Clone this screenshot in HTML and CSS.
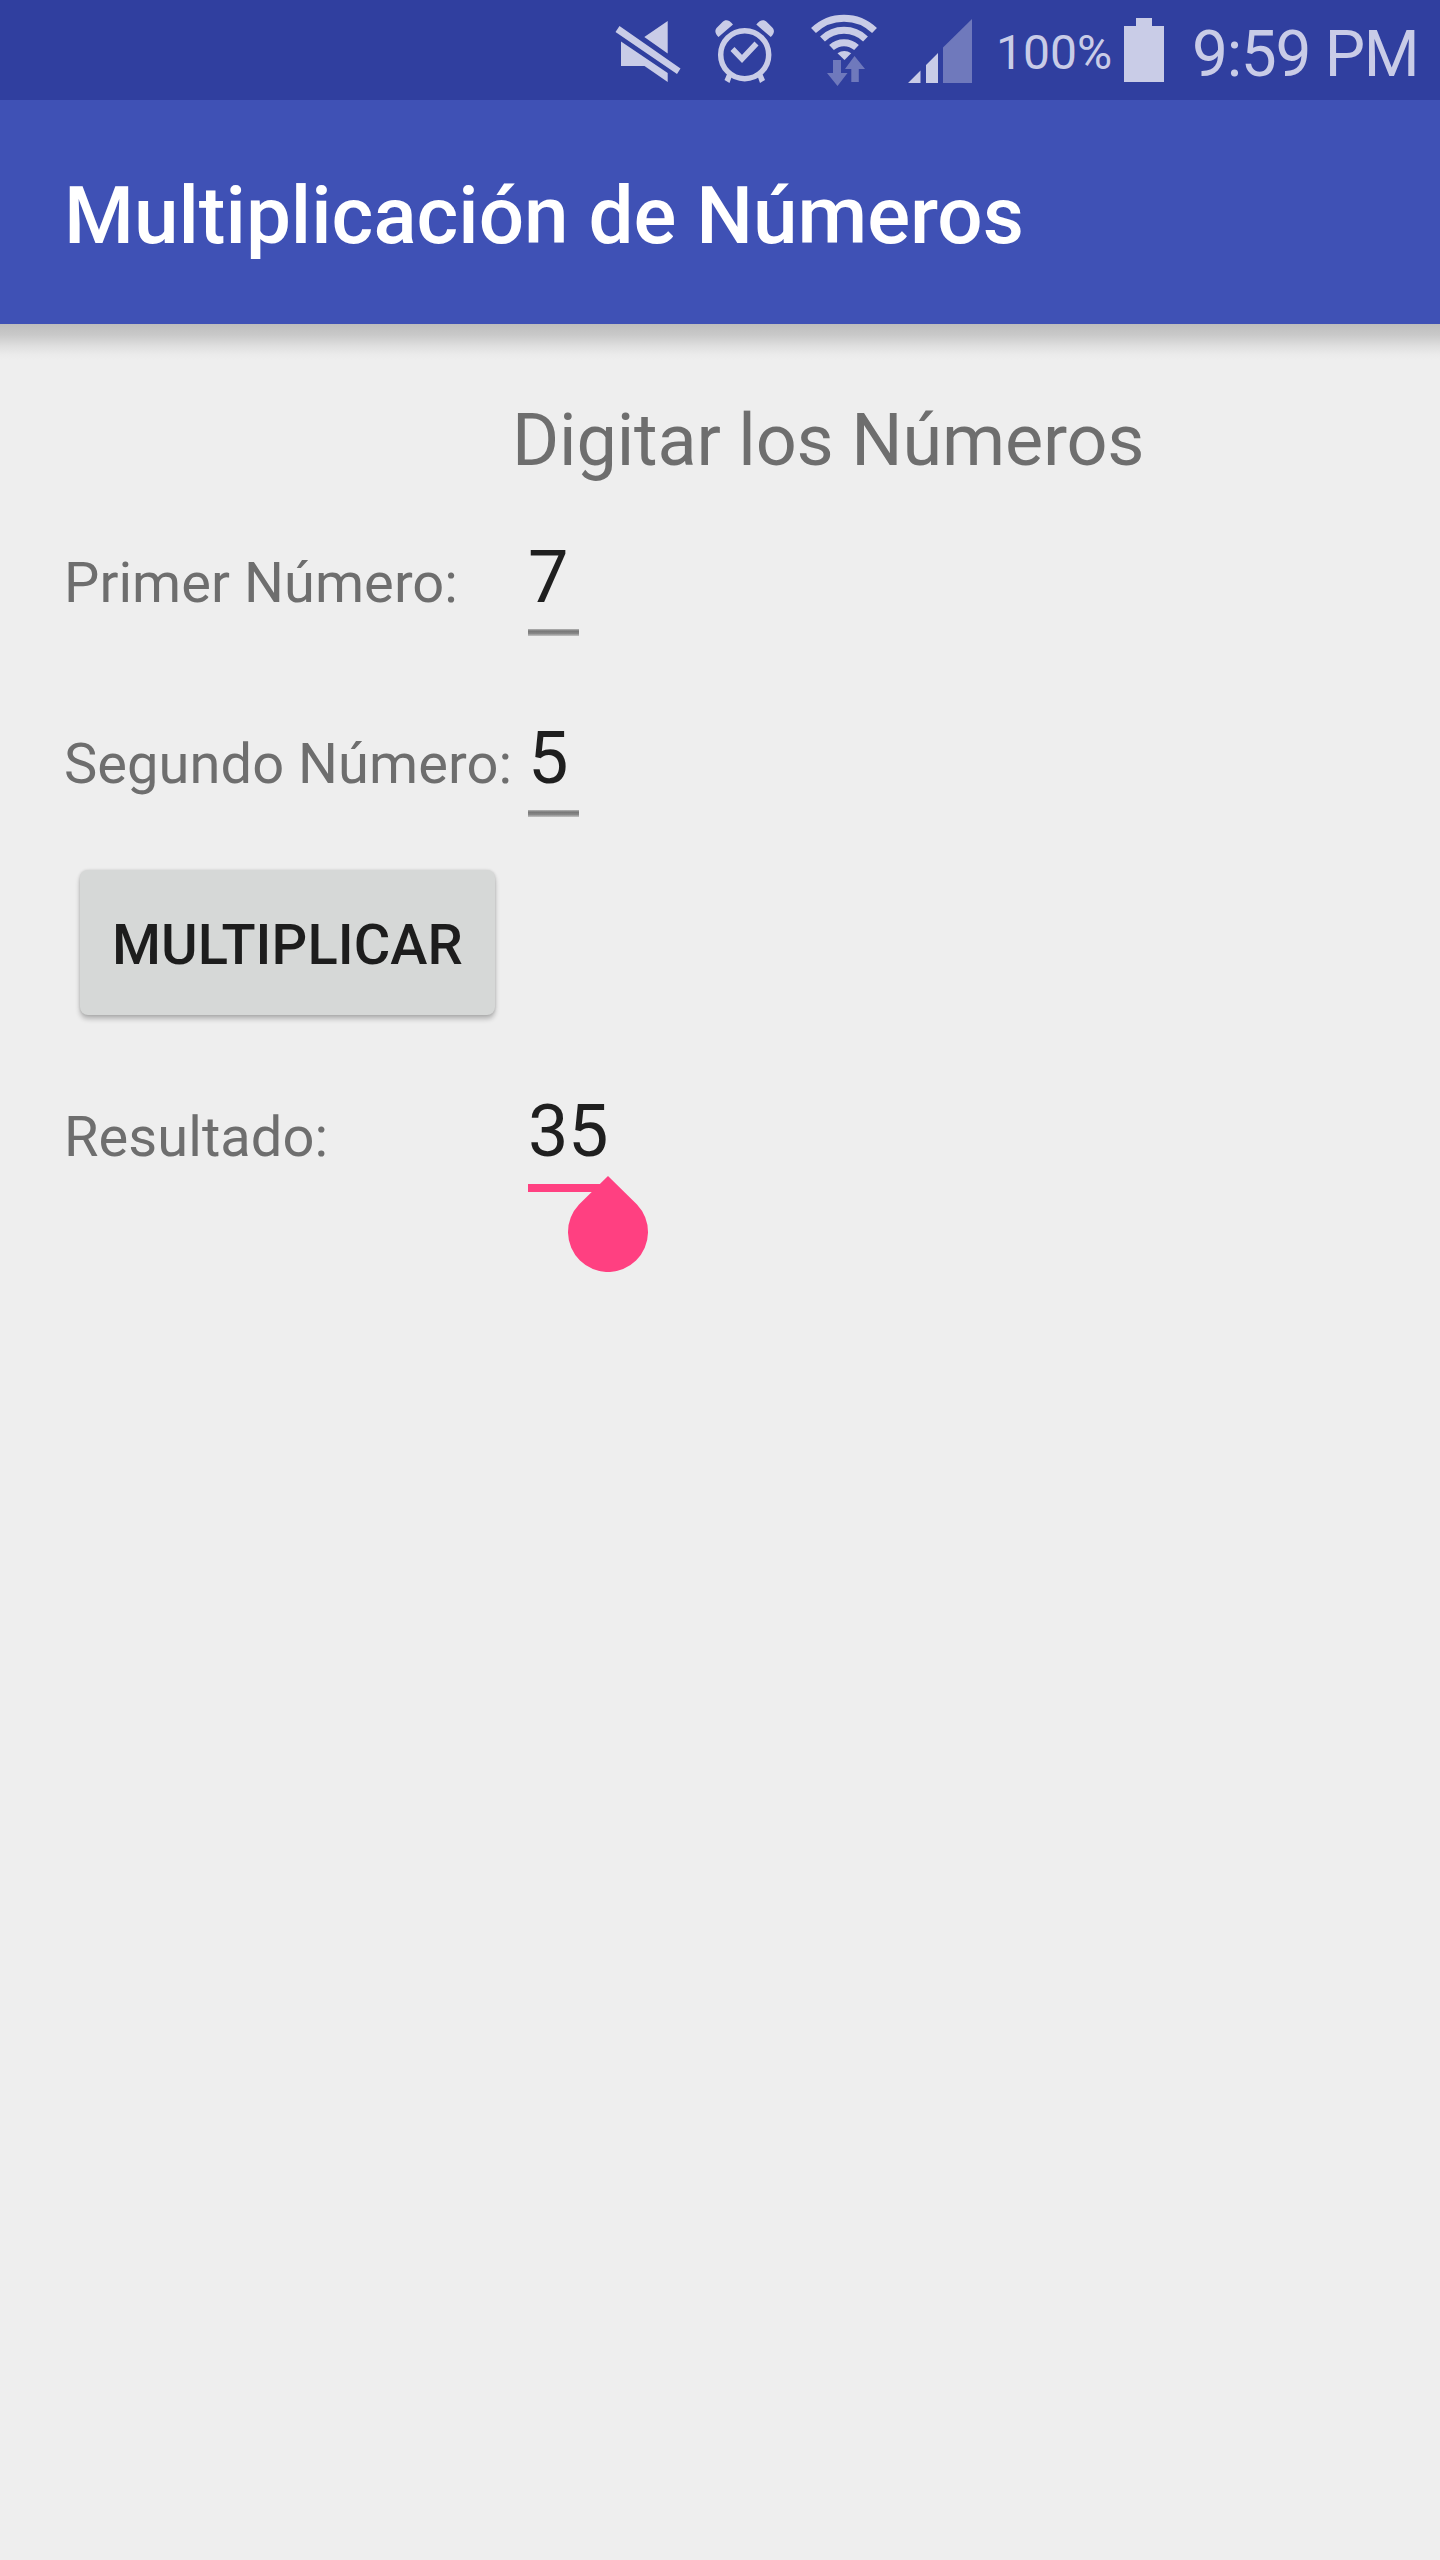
FILE: index.html
```html
<!DOCTYPE html>
<html lang="es">
<head>
<meta charset="utf-8">
<title>Multiplicación de Números</title>
<link rel="stylesheet" href="styles.css">
</head>
<body>
<header class="status-bar">
  <svg class="status-icons" viewBox="0 0 380 100" aria-hidden="true">
    <!-- muted speaker -->
    <path class="lit" d="M44.3 37 67.7 21v32.500zM21 41.500 67.700 73v9L44.500 66H21zM19.500 26 80.500 68.500 77 74 15.500 32z"/>
    <!-- alarm clock -->
    <circle class="ring" cx="144.700" cy="54.700" r="24"/>
    <path class="lit" d="M118.500 37c-4-4-4-7-1-10l5-5c3-3 7-2 10.500 2.500zM170.800 37c4-4 4-7 1-10l-5-5c-3-3-7-2-10.500 2.500zM127.500 73l4.500 3-2.500 7-5-3zM162 73l-4.500 3 2.500 7 5-3z"/>
    <path class="tick" d="m132.500 49 9.500 10 14.500-15.500"/>
    <!-- wifi with traffic arrows -->
    <path class="wave" d="M213.500 30.500a44 44 0 0 1 61 0M222.500 39a31 31 0 0 1 43 0M231.500 47.500a18.500 18.500 0 0 1 25 0"/>
    <path class="lit" d="M237.500 53.300q6.800-4.800 13.700 0L244.500 60z"/>
    <path class="dim" d="M233 60h8v13h6.500L237.500 86 227 73h6zM254.500 56 265 69h-6.200v13h-7.500V69H245z"/>
    <!-- signal strength -->
    <path class="lit" d="M308 83l12.500-12.500V83zM326 83V65l12-12v30z"/>
    <path class="dim" d="M343 83V47.500L372 19v64z"/>
  </svg>
  <span class="percent">100%</span>
  <svg class="battery" viewBox="0 0 40 64" aria-hidden="true"><path class="lit" d="M12 0h16v8h12v56H0V8h12z"/></svg>
  <span class="clock">9:59 PM</span>
</header>
<div class="app-bar"><h1 class="title">Multiplicación de Números</h1></div>
<main class="content">
  <h2 class="heading">Digitar los Números</h2>
  <div class="row"><span class="label">Primer Número:</span><span class="field">7</span></div>
  <div class="row"><span class="label">Segundo Número:</span><span class="field">5</span></div>
  <div class="actions"><button class="button" type="button">MULTIPLICAR</button></div>
  <div class="row">
    <span class="label">Resultado:</span>
    <span class="field focused">35<svg class="handle" viewBox="0 0 80 96" aria-hidden="true"><path d="M40 0 69 28.500A40 40 0 1 1 11 28.500z"/></svg></span>
  </div>
</main>
</body>
</html>
```
FILE: styles.css
```css
* { box-sizing: border-box; }

body {
  margin: 0;
  min-height: 2560px;
  background: #eee;
  font-family: Roboto, sans-serif;
  overflow-x: hidden;
}

.status-bar {
  display: flex;
  height: 100px;
  padding-left: 600px;
  background: #303f9f;
  color: #c9cce7;
  white-space: nowrap;
}

.status-icons { flex: none; width: 380px; height: 100px; }
.lit { fill: #c9cce7; }
.dim { fill: #6f79bc; }
.ring, .tick, .wave { fill: none; stroke: #c9cce7; }
.ring { stroke-width: 5.5px; }
.tick { stroke-width: 5.5px; }
.wave { stroke-width: 7px; }

.percent {
  width: 128px;
  margin-left: 16px;
  font-size: 48px;
  line-height: 105px;
}

.battery { flex: none; width: 40px; height: 64px; margin: 18px 0 0 0; }

.clock {
  margin-left: 28px;
  font-size: 64px;
  letter-spacing: -1.3px;
  line-height: 110px;
}

.app-bar {
  position: relative;
  height: 224px;
  padding: 4px 64px 0;
  background: #3f51b5;
}

.app-bar::after {
  content: "";
  position: absolute;
  top: 100%;
  left: 0;
  right: 0;
  height: 36px;
  background: linear-gradient(#bdbdbd, #c9c9c9 30%, #dedede 60%, #ebebeb 85%, #eee);
}

.title {
  margin: 0;
  color: #fff;
  font-size: 80px;
  font-weight: 500;
  line-height: 224px;
}

.content { padding: 64px 0 0 64px; }

.heading {
  margin: 0 0 0 448px;
  color: #6e6e6e;
  font-size: 72px;
  font-weight: 400;
  letter-spacing: -.17px;
  line-height: 105px;
}

.row {
  display: flex;
  align-items: baseline;
  height: 181px;
  padding-top: 43px;
}

.label {
  width: 464px;
  color: #6e6e6e;
  font-size: 56px;
  letter-spacing: .06px;
}

.field {
  position: relative;
  min-width: 51px;
  height: 100px;
  color: #1f1f1f;
  font-size: 72px;
  letter-spacing: -.5px;
  line-height: 84px;
  background: linear-gradient(#b5b5b5, #777 30%, #888 65%, #c4c4c4) 0 100% / 100% 7px no-repeat;
}

.focused {
  height: 102px;
  background: linear-gradient(#ff4081, #ff4081) 0 100% / 100% 8px no-repeat;
}

.handle {
  position: absolute;
  top: 86px;
  right: -40px;
  width: 80px;
  height: 96px;
  fill: #ff4081;
}

.actions { height: 192px; padding: 15px 0 0 16px; }

.button {
  display: block;
  width: 415px;
  height: 145px;
  padding: 6px 0 0;
  border: 0;
  border-radius: 8px;
  background: #d6d8d7;
  box-shadow: 0 4px 5px rgba(0, 0, 0, .24), 0 0 3px rgba(0, 0, 0, .14);
  color: #1d1d1d;
  font: 500 56px/139px Roboto, sans-serif;
  letter-spacing: .1px;
}
```
